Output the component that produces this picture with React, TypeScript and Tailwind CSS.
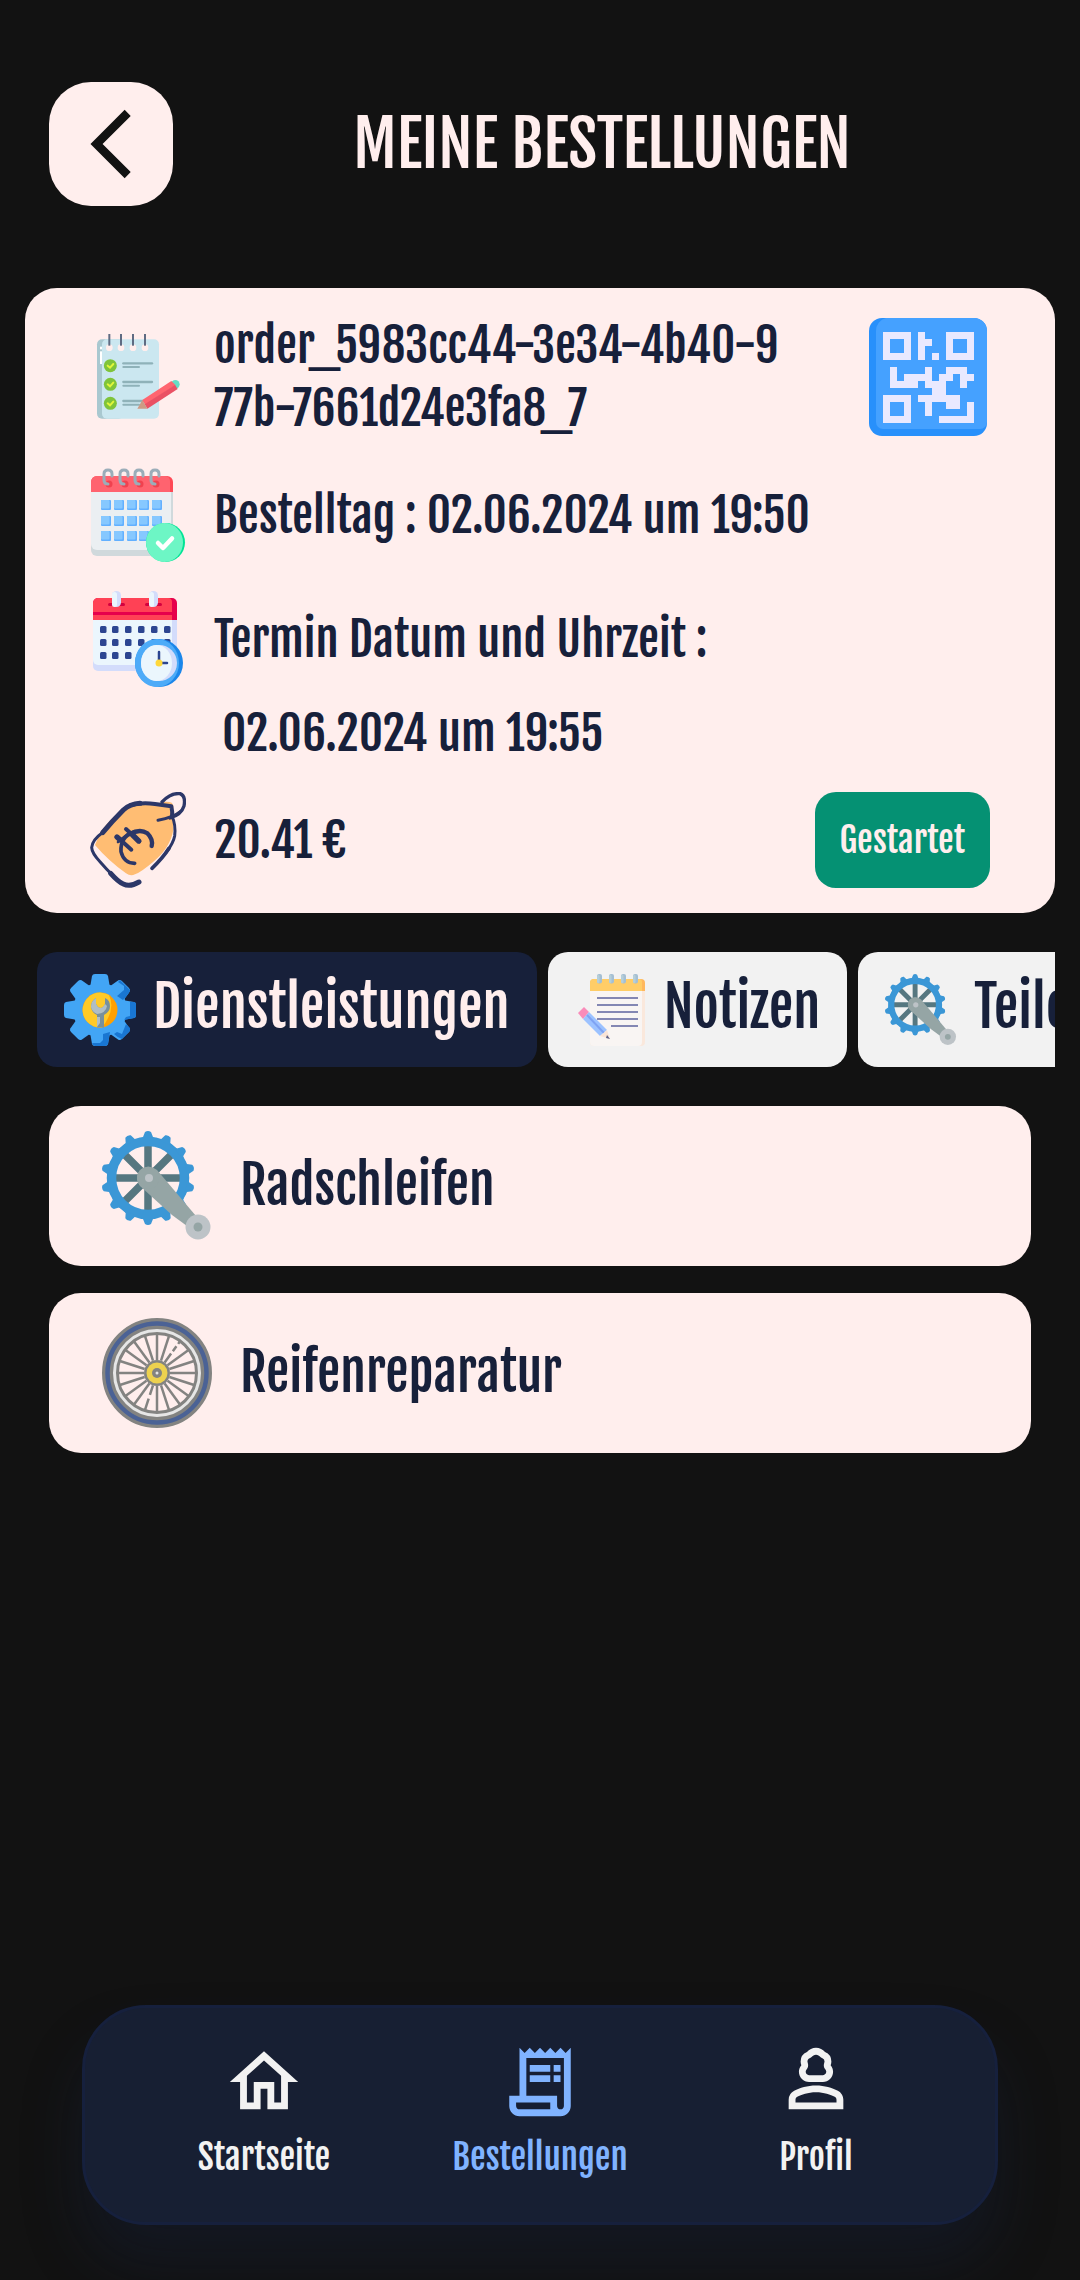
import type { ReactNode } from "react";
import {
  MdArrowBackIosNew,
  MdOutlineHome,
  MdOutlinePerson3,
  MdOutlineReceiptLong,
} from "react-icons/md";

function NotebookIcon({ className }: { className: string }) {
  return (
    <svg viewBox="30 27 288 288" className={className} aria-hidden="true">
      <rect x="51" y="58" width="80" height="238" rx="15" fill="#a9c8d0" />
      <rect x="66" y="58" width="171" height="238" rx="15" fill="#cbe7f0" />
      <rect x="60" y="80" width="6" height="8" fill="#fff" />
      <rect x="60" y="94" width="6" height="38" fill="#fff" />
      {[88, 123, 159, 195].map((x) => (
        <g key={x}>
          <circle cx={x} cy="83" r="10" fill="#ffeeed" />
          <rect x={x - 3} y="42" width="6" height="35" fill="#5f6b82" />
        </g>
      ))}
      {[137, 193, 250].map((y) => (
        <g key={y} fill="none" strokeLinecap="round">
          <circle cx="91" cy={y} r="19.5" fill="#7fc43b" />
          <path d={`M83 ${y} l7 6 l10 -11`} stroke="#e2f63a" strokeWidth="6" />
          <path d={`M130 ${y - 7} h86`} stroke="#8fb2b9" strokeWidth="7" />
          <path d={`M130 ${y + 4} h47`} stroke="#8fb2b9" strokeWidth="6" />
        </g>
      ))}
      <circle cx="286" cy="193" r="13" fill="#66dcc5" />
      <path d="M274 183 L187 240 L195 254 L287 196Z" fill="#ff6570" />
      <path d="M285 195 L194 253 L202 266 L293 207Z" fill="#ea5164" />
      <path d="M187 240 L172 266 L202 266Z" fill="#cd9a84" />
    </svg>
  );
}

function CalendarCheckIcon({ className }: { className: string }) {
  return (
    <svg viewBox="0 0 96 96" className={className} aria-hidden="true">
      <rect x="1" y="12" width="82" height="77" rx="6" fill="#d0d9dc" />
      <path d="M1 20H81V77a6 6 0 0 1-6 6H7a6 6 0 0 1-6-6Z" fill="#ebeff2" />
      <path d="M1 25V15a6 6 0 0 1 6-6H77a6 6 0 0 1 6 6V25Z" fill="#ff4855" />
      <path d="M1 25V15a6 6 0 0 1 6-6H75a5 5 0 0 1 5 5V25Z" fill="#ff636f" />
      {[18, 34, 49, 65].map((x) => (
        <g key={x}>
          <circle cx={x + 1} cy="17" r="3.5" fill="#f0424f" />
          <path d={`M${x + 4} 9V7q0-4-4-4t-4 4v6q0 4 4 4`} fill="none" stroke="#9badb9" strokeWidth="3" strokeLinecap="round" />
        </g>
      ))}
      {[33, 49, 64].map((y) =>
        [11, 24, 37, 49, 62].map((x) => (
          <g key={`${x}-${y}`}>
            <rect x={x} y={y} width="10" height="10" rx="1" fill="#62b0ff" />
            <rect x={x} y={y} width="8.5" height="8.5" rx="1" fill="#86c8ff" />
          </g>
        )),
      )}
      <circle cx="75.5" cy="75.5" r="19.5" fill="#00e495" />
      <ellipse cx="74.5" cy="75.5" rx="18.5" ry="19.5" fill="#6df6c5" />
      <path d="M68 76l5 5 9-9.500" fill="none" stroke="#fff" strokeWidth="4.500" strokeLinecap="round" strokeLinejoin="round" />
    </svg>
  );
}

function CalendarClockIcon({ className }: { className: string }) {
  return (
    <svg viewBox="0 0 96 96" className={className} aria-hidden="true">
      <rect x="3" y="15" width="84" height="65" rx="5" fill="#d3dcfb" />
      <path d="M3 20H82V69a5 5 0 0 1-5 5H8a5 5 0 0 1-5-5Z" fill="#ebf6fd" />
      <path d="M3 29V12a5 5 0 0 1 5-5H82a5 5 0 0 1 5 5V29Z" fill="#e6004c" />
      <path d="M3 21V12a5 5 0 0 1 5-5H78a4 4 0 0 1 4 4V21ZM3 24H82V29H3Z" fill="#ff4155" />
      {[22, 59].map((x) => (
        <g key={x}>
          <rect x={x - 4} y="12" width="17" height="3" rx="1.5" fill="#d4003f" />
          <rect x={x} y="0" width="9" height="16" rx="4.500" fill="#d3dcfb" />
          <rect x={x} y="1" width="5" height="15" rx="2.500" fill="#ebf6fd" />
        </g>
      ))}
      {[35, 48, 61].map((y) =>
        [10, 22, 35, 48, 61, 74].map((x) => (
          <rect key={`${x}-${y}`} x={x} y={y} width="6.500" height="7" rx="1.500" fill="#2c4591" />
        )),
      )}
      <circle cx="69" cy="72" r="24" fill="#1b86ea" />
      <ellipse cx="67" cy="72" rx="22" ry="24" fill="#4dabf8" />
      <circle cx="69" cy="72" r="18" fill="#d3dcfb" />
      <ellipse cx="66.500" cy="72" rx="15.500" ry="18" fill="#ebf6fd" />
      <path d="M69 61V72H77" fill="none" stroke="#2c4591" strokeWidth="2.500" strokeLinecap="round" />
      <circle cx="69" cy="72" r="3.500" fill="#ffd83b" />
    </svg>
  );
}

function PriceTagIcon({ className }: { className: string }) {
  return (
    <svg viewBox="30 36 288 288" className={className} aria-hidden="true">
      <path d="M45 195 L62 155 Q100 105 145 75 L240 68 Q262 62 275 68 Q284 78 278 90 L280 150 Q270 205 220 245 Q185 275 165 283 Q152 290 138 280 Q85 242 45 195Z" fill="#ffbd73" />
      <g fill="none" stroke="#2c3768" strokeLinecap="round" strokeLinejoin="round">
        <path d="M68 158 Q95 125 130 90 Q150 72 180 70" strokeWidth="15" />
        <path d="M150 76 Q185 66 225 72 L274 79 Q278 95 276 112" strokeWidth="12" />
        <path d="M276 108 Q288 135 284 168 Q280 190 258 218" strokeWidth="9" />
        <path d="M267 205 Q248 235 216 265" strokeWidth="11" />
        <path d="M70 156 Q36 180 35 203 Q36 220 60 245 Q80 268 100 288" strokeWidth="9" />
        <path d="M92 280 Q115 306 130 312 Q150 322 177 306" strokeWidth="15" />
        <path d="M246 66 Q272 38 300 41 Q318 48 312 78 Q304 104 270 114" strokeWidth="10" />
        <path d="M302 94 Q280 112 234 121" strokeWidth="9" />
        <path d="M164 250 Q132 250 123 215 Q120 170 162 156" strokeWidth="11" />
        <path d="M150 162 Q180 145 202 160 Q220 178 215 198" strokeWidth="13" />
        <path d="M112 171 L154 209 M138 147 L178 184" strokeWidth="12" />
        <path d="M158 165 L176 183 M111 171 L120 179" strokeWidth="16" />
        <path d="M114 186 L146 160" strokeWidth="8" />
      </g>
    </svg>
  );
}

const qrRows = [
  "1111010001111",
  "1001011001001",
  "1001010001001",
  "1111010101111",
  "0000000000000",
  "0100001001110",
  "0101111011011",
  "0111101110010",
  "0000000110000",
  "1111011111100",
  "1001001001101",
  "1001001000001",
  "1111000011111",
];

function QrIcon({ className }: { className: string }) {
  return (
    <svg viewBox="0 0 118 118" className={className} aria-hidden="true">
      <rect width="118" height="118" rx="13" fill="#2890fb" />
      <path d="M7 13A13 13 0 0 1 17 0H105A13 13 0 0 1 118 13V104A7 7 0 0 1 111 111H14A7 7 0 0 1 7 104Z" fill="#45a1ff" />
      <g fill="#e9e9ff" shapeRendering="crispEdges">
        {qrRows.flatMap((row, r) =>
          row.split("").map((cell, c) =>
            cell === "1" ? <rect key={`${r}-${c}`} x={14 + c * 7} y={14 + r * 7} width="7" height="7" /> : null,
          ),
        )}
      </g>
    </svg>
  );
}

function GearIcon({ className }: { className: string }) {
  return (
    <svg viewBox="0 0 72 72" className={className} aria-hidden="true">
      <g fill="#42a5f5">
        <circle cx="36" cy="36" r="27" />
        {[0, 45, 90, 135, 180, 225, 270, 315].map((a) => (
          <path key={a} d="M26 14L28 2Q28.500 0 31 0H41Q43.500 0 44 2L46 14Z" transform={`rotate(${a} 36 36)`} />
        ))}
      </g>
      <g fill="#1976d2">
        <path d="M66 28H70Q72 28 72 31V41Q72 44 70 44L60 46L62 43L66 42Z" />
        <path d="M56 6L66 16Q66 19 59 26L53 22L60 16L60 12L54 8Z" />
        <path d="M66 54V57L58 65Q54 64 50 60L53 58L58 60L60 55L62 50Z" />
        <path d="M28 69H36L39 66V60L46 58L44 70Q43 72 41 72H31Q29 72 28 69Z" />
      </g>
      <circle cx="36" cy="36" r="17.500" fill="#ffa000" />
      <path d="M45 21Q52 36 38 53.500A17.500 17.500 0 1 1 45 21Z" fill="#ffca28" />
      <path d="M32 24Q27 27 27 33Q28 39 33 41V53.500H40V41Q46 38 46 32Q46 26 41 24V30Q39 34 36.500 34Q33 33 32 30Z" fill="#78909c" />
      <path d="M32 24Q27 27 27 33Q28 38 33 40Q42 39 43 32L41 30Q39 34 36.500 34Q33 33 32 30ZM33 43H36V49L33 53Z" fill="#b0bec5" />
    </svg>
  );
}

function NotepadIcon({ className }: { className: string }) {
  return (
    <svg viewBox="0 0 72 72" className={className} aria-hidden="true">
      <rect x="15" y="10" width="55" height="62" rx="4" fill="#fae8dc" />
      <path d="M15 14H67V68a4 4 0 0 1-4 4H19a4 4 0 0 1-4-4Z" fill="#f9f5f3" />
      <path d="M15 17V9a4 4 0 0 1 4-4H66a4 4 0 0 1 4 4V17Z" fill="#ffb85e" />
      <path d="M15 17V9a4 4 0 0 1 4-4H64a3 3 0 0 1 3 3V17Z" fill="#ffcd67" />
      {[22, 34, 46, 58].map((x) => (
        <g key={x}>
          <rect x={x} y="0" width="5" height="9.500" rx="2" fill="#a4bfd3" />
          <rect x={x} y="1" width="2.500" height="8" rx="1" fill="#b5cfd9" />
        </g>
      ))}
      <path d="M22 24H63M22 31H63M22 38H63M22 45H63M36 52H63" stroke="#8487b3" strokeWidth="2" />
      <path d="M3 39L9 33L14 38L8 45Z" fill="#f98cba" />
      <path d="M14 38L32 56L25 62L8 45Z" fill="#9cc2ff" />
      <path d="M12 41L29 59" stroke="#7fa3f3" strokeWidth="2" />
      <path d="M32 56L35 65L25 62Z" fill="#fae4d6" />
      <path d="M32 61L35 65L31 64Z" fill="#5b5f86" />
    </svg>
  );
}

function CrankIcon({ className }: { className: string }) {
  return (
    <svg viewBox="0 0 110 110" className={className} aria-hidden="true">
      <path d="M46 13V81M12 47H80M22 23L70 71M70 23L22 71" stroke="#567780" strokeWidth="7.500" />
      <circle cx="46" cy="47" r="36.500" fill="none" stroke="#3b97d6" strokeWidth="9.500" />
      {Array.from({ length: 14 }, (_, i) => (
        <path
          key={i}
          d="M37 8L41 6L43 1Q46 -1 49 1L51 6L55 8Z"
          fill="#3b97d6"
          transform={`rotate(${(i * 360) / 14} 46 47)`}
        />
      ))}
      <path d="M38 55Q32 46 38 39Q46 32 55 39L94 85L85 95L70 84Z" fill="#95a5a5" />
      <circle cx="46" cy="47" r="11" fill="#95a5a5" />
      <circle cx="47" cy="47" r="4" fill="#bdc3c7" />
      <circle cx="96" cy="96" r="12.500" fill="#bdc3c7" />
      <circle cx="96" cy="96" r="4.500" fill="#95a5a5" />
    </svg>
  );
}

function WheelIcon({ className }: { className: string }) {
  return (
    <svg viewBox="0 0 110 110" className={className} aria-hidden="true">
      <g fill="none">
        <circle cx="55" cy="55" r="46.500" stroke="#838381" strokeWidth="17" />
        <circle cx="55" cy="55" r="49.500" stroke="#4b6295" strokeWidth="4.500" />
        <circle cx="55" cy="55" r="42.500" stroke="#e6e6e6" strokeWidth="3" />
      </g>
      {Array.from({ length: 20 }, (_, i) => (
        <path
          key={i}
          d="M55 42V16"
          stroke="#838381"
          strokeWidth="2.500"
          strokeDasharray={i === 2 ? "11 3 6 3" : i === 11 ? "10 4 12" : undefined}
          transform={`rotate(${i * 18} 55 55)`}
        />
      ))}
      <circle cx="55" cy="55" r="13" fill="#838381" />
      <circle cx="55" cy="55" r="10.500" fill="#edd14f" />
      <circle cx="55" cy="55" r="5" fill="#838381" />
      <circle cx="55" cy="55" r="1.500" fill="#e6e6e6" />
    </svg>
  );
}

function DetailRow({ icon, children }: { icon: ReactNode; children: ReactNode }) {
  return (
    <div className="flex items-center gap-7">
      {icon}
      {children}
    </div>
  );
}

const tabs = [
  { label: "Dienstleistungen", Icon: GearIcon },
  { label: "Notizen", Icon: NotepadIcon },
  { label: "Teile", Icon: CrankIcon },
];

const services = [
  { label: "Radschleifen", Icon: CrankIcon },
  { label: "Reifenreparatur", Icon: WheelIcon },
];

const navItems = [
  { label: "Startseite", Icon: MdOutlineHome },
  { label: "Bestellungen", Icon: MdOutlineReceiptLong },
  { label: "Profil", Icon: MdOutlinePerson3 },
];

export default function App() {
  return (
    <div className="flex min-h-screen flex-col bg-[#121212] font-['Fjalla_One','Roboto_Condensed',sans-serif] text-[#17203a]">
      <header className="flex items-center px-[49px] py-[82px]">
        <button
          type="button"
          aria-label="Zurück"
          className="flex size-[124px] shrink-0 items-center justify-center rounded-[42px] bg-[#ffeeed] text-[#121212]"
        >
          <MdArrowBackIosNew className="size-[82px]" />
        </button>
        <h1 className="flex-1 text-center text-[63px] leading-[76px] text-[#ffeeed]">MEINE BESTELLUNGEN</h1>
      </header>

      <main className="flex flex-col">
        <section className="mx-[25px] flex flex-col rounded-[32px] bg-[#ffeeed] px-[65px] pt-[26px] pb-[25px] text-[47px] leading-[63px]">
          <div className="flex items-center gap-7">
            <NotebookIcon className="size-24 shrink-0" />
            <p className="flex-1 pr-12 break-all">order_5983cc44-3e34-4b40-977b-7661d24e3fa8_7</p>
            <button type="button" aria-label="QR-Code anzeigen" className="flex size-[124px] shrink-0 items-center justify-center">
              <QrIcon className="size-[118px]" />
            </button>
          </div>
          <div className="mt-[27px]">
            <DetailRow icon={<CalendarCheckIcon className="size-24 shrink-0" />}>
              <p>Bestelltag : 02.06.2024 um 19:50</p>
            </DetailRow>
          </div>
          <div className="mt-7">
            <DetailRow icon={<CalendarClockIcon className="size-24 shrink-0" />}>
              <p>Termin Datum und Uhrzeit :</p>
            </DetailRow>
          </div>
          <p className="mt-[15px] pl-[132px]">02.06.2024 um 19:55</p>
          <div className="mt-[27px] flex items-center justify-between">
            <DetailRow icon={<PriceTagIcon className="size-24 shrink-0" />}>
              <p>20.41 €</p>
            </DetailRow>
            <button type="button" className="h-24 rounded-[21px] bg-[#059173] px-[25px] text-[35px] leading-[44px] text-[#ffeeed]">
              Gestartet
            </button>
          </div>
        </section>

        <div role="tablist" className="mx-[25px] mt-[39px] flex gap-[11px] overflow-hidden pl-3">
          {tabs.map(({ label, Icon }, i) => (
            <button
              key={label}
              type="button"
              role="tab"
              aria-selected={i === 0}
              className={
                i === 0
                  ? "flex h-[115px] shrink-0 items-center gap-[17px] rounded-[20px] bg-[#17203a] px-[27px] text-[#ffeeed]"
                  : "flex h-[115px] shrink-0 items-center gap-[17px] rounded-[20px] bg-[#f2f2f2] px-[27px]"
              }
            >
              <Icon className="size-[72px] shrink-0" />
              <span className="pb-1 text-[55px] leading-[72px]">{label}</span>
            </button>
          ))}
        </div>

        <ul className="mx-[49px] mt-[39px] flex flex-col gap-[27px]">
          {services.map(({ label, Icon }) => (
            <li key={label} className="flex h-40 items-center gap-7 rounded-[32px] bg-[#ffeeed] px-[53px] text-[52px] leading-[64px]">
              <Icon className="size-[110px] shrink-0" />
              <span>{label}</span>
            </li>
          ))}
        </ul>
      </main>

      <nav className="mx-[82px] mt-auto mb-[55px] rounded-[64px] border-[3px] border-[#16203d] bg-[#171f33] px-[41px] pt-[33px] pb-[43px] shadow-[0_40px_60px_rgba(23,40,80,0.25)]">
        <ul className="grid grid-cols-3">
          {navItems.map(({ label, Icon }) => (
            <li key={label}>
              <a
                href="#"
                aria-current={label === "Bestellungen" ? "page" : undefined}
                className={
                  label === "Bestellungen"
                    ? "flex flex-col items-center gap-3 text-[35px] leading-[44px] text-[#80b3ff]"
                    : "flex flex-col items-center gap-3 text-[35px] leading-[44px] text-[#f2f2f2]"
                }
              >
                <Icon className="size-[82px]" />
                <span>{label}</span>
              </a>
            </li>
          ))}
        </ul>
      </nav>
    </div>
  );
}
